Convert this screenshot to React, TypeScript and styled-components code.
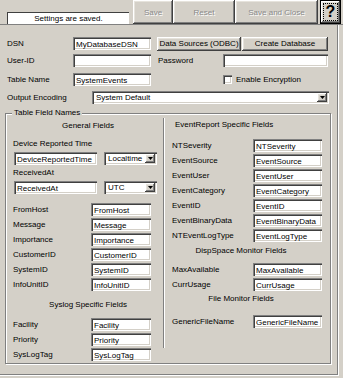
import React from "react";
import styled, { createGlobalStyle, css } from "styled-components";

const GlobalStyle = createGlobalStyle`
  html, body { margin: 0; padding: 0; background: #d4d0c8; }
  body {
    font-family: "Liberation Sans", Arial, sans-serif;
    font-size: 8px;
    color: #000;
  }
`;

const raised = css`
  box-shadow: inset -1px -1px #404040, inset 1px 1px #fff,
    inset -2px -2px #808080, inset 2px 2px #e6e3dc;
`;
const sunken = css`
  box-shadow: inset 1px 1px #808080, inset 2px 2px #404040,
    inset -1px -1px #fff, inset -2px -2px #d4d0c8;
`;

const Dialog = styled.div`
  width: 343px;
  height: 378px;
  overflow: hidden;
  background: #d4d0c8;
`;

const Toolbar = styled.div`
  display: flex;
  height: 24px;
  border-bottom: 1px solid #808080;
`;

const Status = styled.div`
  align-self: flex-end;
  width: 121px;
  height: 11px;
  margin-left: 7px;
  background: #fff;
  border-top: 1px solid #404040;
  border-left: 1px solid #404040;
  text-align: center;
  line-height: 11px;
`;

const ToolButton = styled.div<{ $w: number; $ml?: number }>`
  width: ${(p) => p.$w}px;
  margin-left: ${(p) => p.$ml ?? 0}px;
  display: flex;
  align-items: center;
  justify-content: center;
  color: #8a8a8a;
  text-shadow: 1px 1px #fff;
  ${raised}
`;

const HelpButton = styled.div`
  width: 21px;
  margin-left: 2px;
  box-sizing: border-box;
  border: 1px solid #000;
  padding: 2px;
  ${raised}
`;

const HelpFocus = styled.div`
  height: 100%;
  box-sizing: border-box;
  border: 1px dotted #000;
  display: flex;
  align-items: center;
  justify-content: center;
  font-size: 16px;
  font-weight: bold;
`;

const Body = styled.div`
  box-sizing: border-box;
  width: 339px;
  height: 351px;
  padding: 12px 0 0 7px;
  border-right: 1px solid #fff;
  border-bottom: 1px solid #fff;
  box-shadow: inset -1px -1px #808080;
`;

const Row = styled.div<{ $mt?: number }>`
  display: flex;
  align-items: center;
  height: 13px;
  margin-top: ${(p) => p.$mt ?? 0}px;
`;

const Label = styled.div<{ $w: number; $ml?: number }>`
  flex-shrink: 0;
  width: ${(p) => p.$w}px;
  margin-left: ${(p) => p.$ml ?? 0}px;
  line-height: 13px;
  white-space: nowrap;
`;

const Field = styled.input<{ $w: number; $ml?: number }>`
  flex-shrink: 0;
  box-sizing: border-box;
  width: ${(p) => p.$w}px;
  height: 13px;
  margin: 0 0 0 ${(p) => p.$ml ?? 0}px;
  padding: 1px 2px 0 3px;
  border: none;
  background: #fff;
  font: inherit;
  color: #000;
  outline: none;
  ${sunken}
`;

const PushButton = styled.div<{ $w: number; $ml?: number }>`
  flex-shrink: 0;
  width: ${(p) => p.$w}px;
  height: 14px;
  margin-left: ${(p) => p.$ml ?? 0}px;
  display: flex;
  align-items: center;
  justify-content: center;
  white-space: nowrap;
  ${raised}
`;

const Check = styled.div<{ $ml?: number }>`
  flex-shrink: 0;
  width: 9px;
  height: 9px;
  margin-left: ${(p) => p.$ml ?? 0}px;
  background: #fff;
  ${sunken}
`;

const SelectBox = styled.div<{ $w: number; $ml?: number }>`
  flex-shrink: 0;
  box-sizing: border-box;
  display: flex;
  align-items: center;
  width: ${(p) => p.$w}px;
  height: 13px;
  margin-left: ${(p) => p.$ml ?? 0}px;
  padding: 2px;
  background: #fff;
  ${sunken}
`;

const SelectText = styled.span`
  flex: 1;
  padding-left: 2px;
  white-space: nowrap;
  overflow: hidden;
`;

const Arrow = styled.div`
  width: 10px;
  height: 9px;
  display: flex;
  align-items: center;
  justify-content: center;
  background: #d4d0c8;
  ${raised}
`;

const Group = styled.div`
  position: relative;
  box-sizing: border-box;
  width: 326px;
  height: 251px;
  margin: 9px 0 0 -2px;
  border: 1px solid #808080;
  box-shadow: inset 1px 1px #fff, 1px 1px #fff;
`;

const Legend = styled.span`
  position: absolute;
  top: -6px;
  left: 6px;
  padding: 0 2px;
  line-height: 10px;
  background: #d4d0c8;
`;

const Columns = styled.div`
  display: grid;
  grid-template-columns: 157px 1fr;
  align-items: start;
  padding-top: 4px;
`;

const LeftCol = styled.div`
  padding-left: 7px;
`;

const RightCol = styled.div`
  box-sizing: border-box;
  height: 230px;
  padding-left: 8px;
  border-left: 1px solid #808080;
  box-shadow: inset 1px 0 #fff;
`;

const Heading = styled.div<{ $mt: number; $align?: string; $pl?: number; $pr?: number }>`
  margin-top: ${(p) => p.$mt}px;
  padding-left: ${(p) => p.$pl ?? 0}px;
  padding-right: ${(p) => p.$pr ?? 0}px;
  text-align: ${(p) => p.$align ?? "center"};
  line-height: 10px;
  white-space: nowrap;
`;

const SubLabel = styled.div<{ $mt: number }>`
  margin-top: ${(p) => p.$mt}px;
  line-height: 10px;
`;

const FieldList = styled.div<{ $mt: number }>`
  margin-top: ${(p) => p.$mt}px;
`;

const FieldRow = styled.div`
  display: flex;
  height: 15px;
`;

const Select = ({ w, ml, value }: { w: number; ml?: number; value: string }) => (
  <SelectBox $w={w} $ml={ml}>
    <SelectText>{value}</SelectText>
    <Arrow>
      <svg width="5" height="3" viewBox="0 0 5 3">
        <path d="M0 0h5L2.5 3z" fill="#000" />
      </svg>
    </Arrow>
  </SelectBox>
);

const Fields = ({ items, lw, fw, mt }: { items: string[]; lw: number; fw: number; mt: number }) => (
  <FieldList $mt={mt}>
    {items.map((name) => (
      <FieldRow key={name}>
        <Label $w={lw}>{name}</Label>
        <Field $w={fw} defaultValue={name} readOnly />
      </FieldRow>
    ))}
  </FieldList>
);

const general = ["FromHost", "Message", "Importance", "CustomerID", "SystemID", "InfoUnitID"];
const syslog = ["Facility", "Priority", "SysLogTag"];
const eventReport = [
  ["NTSeverity", "NTSeverity"],
  ["EventSource", "EventSource"],
  ["EventUser", "EventUser"],
  ["EventCategory", "EventCategory"],
  ["EventID", "EventID"],
  ["EventBinaryData", "EventBinaryData"],
  ["NTEventLogType", "EventLogType"],
];

export default function App() {
  return (
    <Dialog>
      <GlobalStyle />
      <Toolbar>
        <Status>Settings are saved.</Status>
        <ToolButton $w={40} $ml={4}>Save</ToolButton>
        <ToolButton $w={62}>Reset</ToolButton>
        <ToolButton $w={83}>Save and Close</ToolButton>
        <HelpButton>
          <HelpFocus>?</HelpFocus>
        </HelpButton>
      </Toolbar>
      <Body>
        <Row>
          <Label $w={66}>DSN</Label>
          <Field $w={78} defaultValue="MyDatabaseDSN" readOnly />
          <PushButton $w={84} $ml={6}>Data Sources (ODBC)</PushButton>
          <PushButton $w={86} $ml={1}>Create Database</PushButton>
        </Row>
        <Row $mt={4}>
          <Label $w={66}>User-ID</Label>
          <Field $w={78} defaultValue="" readOnly />
          <Label $w={65} $ml={7}>Password</Label>
          <Field $w={105} defaultValue="" readOnly />
        </Row>
        <Row $mt={6}>
          <Label $w={66}>Table Name</Label>
          <Field $w={78} defaultValue="SystemEvents" readOnly />
          <Check $ml={72} />
          <Label $w={90} $ml={4}>Enable Encryption</Label>
        </Row>
        <Row $mt={5}>
          <Label $w={85}>Output Encoding</Label>
          <Select w={237} value="System Default" />
        </Row>
        <Group>
          <Legend>Table Field Names</Legend>
          <Columns>
            <LeftCol>
              <Heading $mt={3}>General Fields</Heading>
              <SubLabel $mt={8}>Device Reported Time</SubLabel>
              <Row $mt={3}>
                <Field $w={83} $ml={1} defaultValue="DeviceReportedTime" readOnly />
                <Select w={53} ml={7} value="Localtime" />
              </Row>
              <SubLabel $mt={3}>ReceivedAt</SubLabel>
              <Row $mt={3}>
                <Field $w={83} $ml={1} defaultValue="ReceivedAt" readOnly />
                <Select w={53} ml={7} value="UTC" />
              </Row>
              <Fields items={general} lw={78} fw={60} mt={9} />
              <Heading $mt={7}>Syslog Specific Fields</Heading>
              <Fields items={syslog} lw={78} fw={60} mt={8} />
            </LeftCol>
            <RightCol>
              <Heading $mt={2} $align="left" $pl={3}>EventReport Specific Fields</Heading>
              <FieldList $mt={9}>
                {eventReport.map(([label, value]) => (
                  <FieldRow key={label}>
                    <Label $w={81}>{label}</Label>
                    <Field $w={69} defaultValue={value} readOnly />
                  </FieldRow>
                ))}
              </FieldList>
              <Heading $mt={2} $pr={20}>DispSpace Monitor Fields</Heading>
              <Fields items={["MaxAvailable", "CurrUsage"]} lw={81} fw={69} mt={7} />
              <Heading $mt={1} $pr={20}>File Monitor Fields</Heading>
              <Fields items={["GenericFileName"]} lw={81} fw={69} mt={11} />
            </RightCol>
          </Columns>
        </Group>
      </Body>
    </Dialog>
  );
}
